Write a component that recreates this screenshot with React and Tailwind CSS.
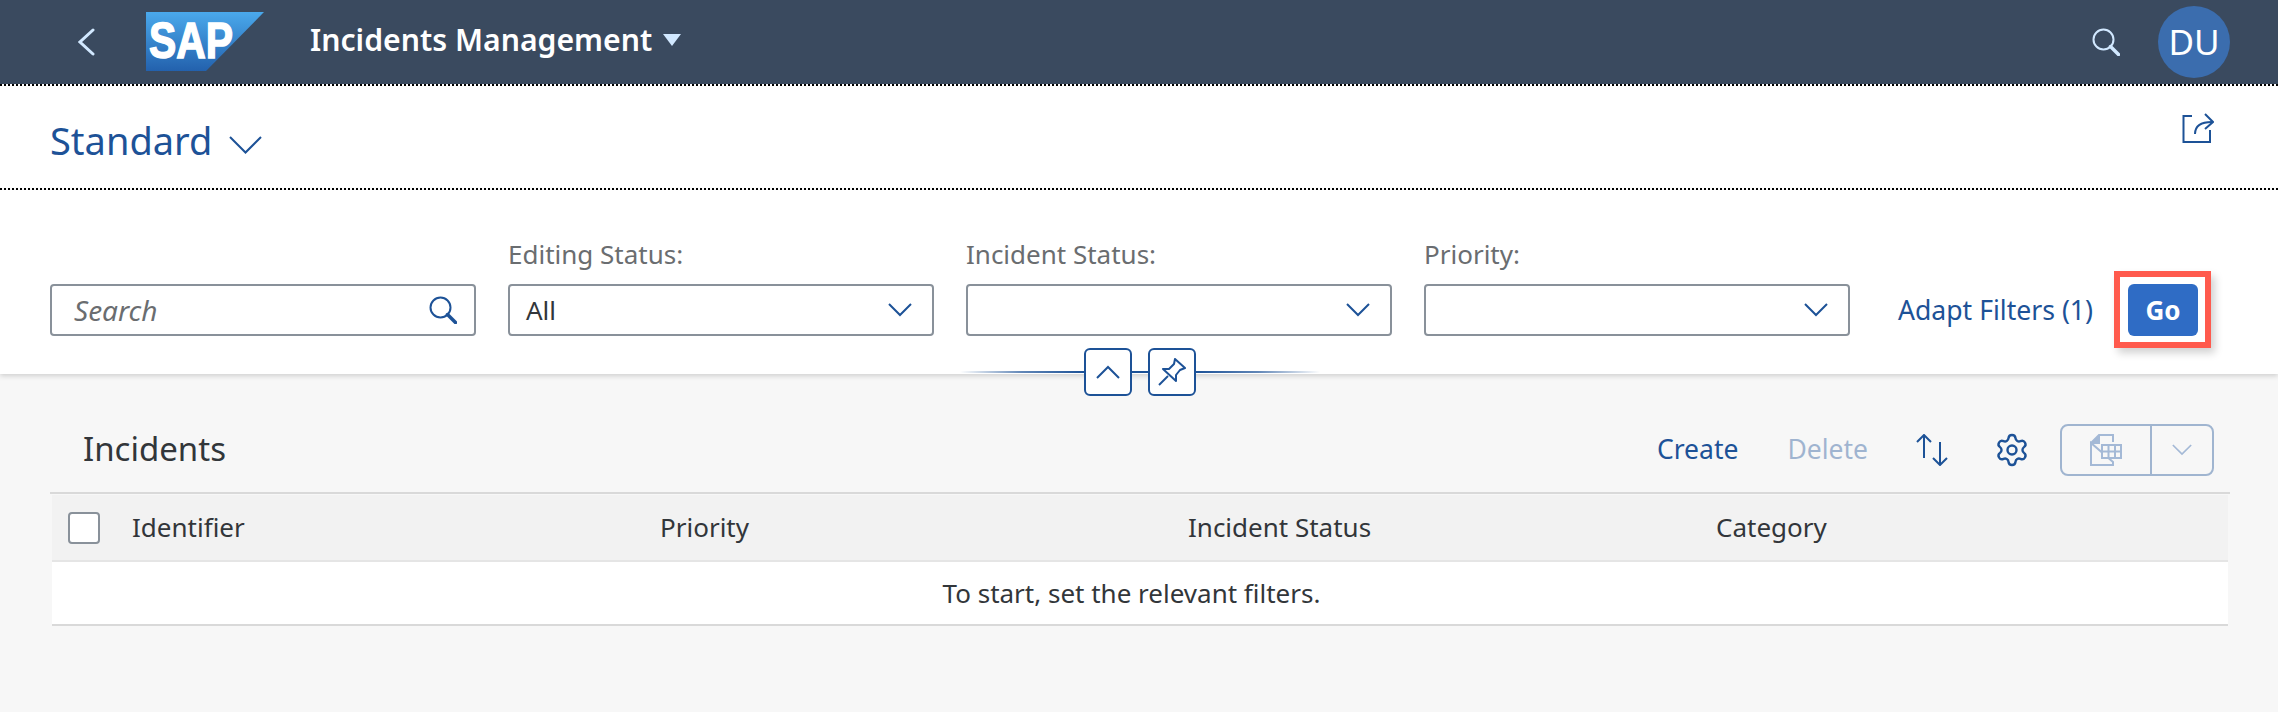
import React from 'react';
import { Settings } from 'lucide-react';

const font = "font-['Noto_Sans','Liberation_Sans',sans-serif]";

const SapLogo = () => (
    <svg width="118" height="59" viewBox="0 0 118 59">
        <defs>
            <linearGradient id="sapFill" x1="0" y1="0" x2="0" y2="1">
                <stop offset="0" stopColor="#4aa9ec" />
                <stop offset="1" stopColor="#2361ad" />
            </linearGradient>
        </defs>
        <polygon points="0,0 118,0 60,59 0,59" fill="url(#sapFill)" />
        <text x="3" y="46" fill="#fff" stroke="#fff" strokeWidth="1.5" fontFamily="Liberation Sans" fontWeight="700" fontSize="50" textLength="84" lengthAdjust="spacingAndGlyphs">
            SAP
        </text>
    </svg>
);

const Chevron = ({ className = '', up = false, size = 24 }) => (
    <svg width={size} height={size} viewBox="0 0 24 24" fill="none" stroke="currentColor" strokeWidth="2" className={className}>
        <path d={up ? 'M1 18 L12 7 L23 18' : 'M1 6 L12 17 L23 6'} />
    </svg>
);

const LensIcon = ({ className = '', stroke = 2 }) => (
    <svg viewBox="0 0 28 28" fill="none" stroke="currentColor" className={className}>
        <circle cx="11.5" cy="11.5" r="10" strokeWidth={stroke} />
        <path d="M18.5 18.5 L26.5 26.5" strokeWidth={stroke + 1.5} strokeLinecap="round" />
    </svg>
);

const SelectField = ({ label, value }) => (
    <div className="w-[426px] flex flex-col">
        <label className="text-[26px] leading-[34px] text-[#6a6d70] mb-[13px]">{label}</label>
        <div className="h-[52px] bg-white border-2 border-[#89919a] rounded-[4px] flex items-center justify-between pl-[16px] pr-[20px]">
            <span className="text-[26px] text-[#32363a]">{value}</span>
            <Chevron className="text-[#1d5297]" />
        </div>
    </div>
);

const columns = ['Identifier', 'Priority', 'Incident Status', 'Category'];

export default function App() {
    return (
        <div className={`w-[2278px] h-[712px] overflow-hidden bg-[#f7f7f7] ${font}`}>
            {/* Shell bar */}
            <header className="h-[84px] bg-[#3a4a5f] flex items-center">
                <svg width="17" height="28" viewBox="0 0 17 28" fill="none" stroke="#d1e8ff" strokeWidth="3" strokeLinecap="round" className="ml-[78px]">
                    <path d="M15 2 L2 14 L15 26" />
                </svg>
                <div className="ml-[51px] mt-[-1px]">
                    <SapLogo />
                </div>
                <span className="ml-[46px] mt-[-4px] text-[30.2px] font-semibold text-white">Incidents Management</span>
                <span className="ml-[11px] mt-[-4px] w-0 h-0 border-x-[9px] border-x-transparent border-t-[12px] border-t-[#d1e8ff]" />
                <LensIcon className="ml-auto w-[28px] h-[28px] text-[#d1e8ff]" />
                <div className="ml-[38px] mr-[48px] w-[72px] h-[72px] rounded-full bg-[#3b6dae] flex items-center justify-center text-[35px] text-white">
                    DU
                </div>
            </header>

            {/* Variant title */}
            <div className="h-[106px] bg-white border-y-2 border-dotted border-black flex items-center pl-[50px] pr-[64px]">
                <span className="mt-[7px] text-[38px] text-[#1d5297]">Standard</span>
                <svg width="33" height="18" viewBox="0 0 33 18" fill="none" stroke="#1d5297" strokeWidth="2" className="ml-[17px] mt-[16px]">
                    <path d="M1 1 L16.5 16.5 L32 1" />
                </svg>
                <svg width="32" height="30" viewBox="0 0 32 30" fill="none" stroke="#1d5297" strokeWidth="2" className="ml-auto mb-[18px]">
                    <path d="M10 3 H1.5 V29 H28 V17" />
                    <path d="M13 21 C13 14 18 9 30 9" />
                    <path d="M23 1 L31 9 L23 16" />
                </svg>
            </div>

            {/* Filter bar */}
            <div className="relative h-[184px] bg-white shadow-[0_2px_5px_rgba(0,0,0,0.16)] flex items-end pb-[38px] pl-[50px] z-10">
                <div className="flex gap-[32px] items-end">
                    <div className="w-[426px] h-[52px] border-2 border-[#89919a] rounded-[4px] flex items-center justify-between pl-[22px] pr-[17px]">
                        <span className="text-[28px] italic text-[#6a6d70]">Search</span>
                        <LensIcon className="w-[28px] h-[28px] text-[#1d5297]" />
                    </div>
                    <SelectField label="Editing Status:" value="All" />
                    <SelectField label="Incident Status:" value="" />
                    <SelectField label="Priority:" value="" />
                </div>
                <span className="ml-[48px] mb-[5px] w-[216px] text-[26.6px] text-[#1d5297]">Adapt Filters (1)</span>
                <div className="mb-[-12px] border-[6px] border-[#ff5a4d] pl-[8px] pr-[7px] pt-[7px] pb-[6px] shadow-[4px_5px_8px_rgba(0,0,0,0.18)]">
                    <div className="w-[70px] h-[52px] rounded-[6px] bg-[#2f6cc5] flex items-center justify-center text-[26px] font-bold text-white">
                        Go
                    </div>
                </div>

                {/* Collapse and pin handles on the edge of the bar */}
                <div className="absolute left-[960px] top-[158px] w-[360px] flex items-center">
                    <span className="h-[2px] flex-1 bg-gradient-to-r from-transparent via-[#1d5297]/70 to-[#1d5297]" />
                    <button className="w-[48px] h-[48px] rounded-[6px] border-2 border-[#1d5297] bg-white flex items-center justify-center text-[#1d5297]">
                        <Chevron up />
                    </button>
                    <span className="h-[2px] w-[16px] bg-[#1d5297]" />
                    <button className="w-[48px] h-[48px] rounded-[6px] border-2 border-[#1d5297] bg-white flex items-center justify-center">
                        <svg width="28" height="28" viewBox="0 0 28 28" fill="none" stroke="#1d5297" strokeWidth="2" strokeLinejoin="round">
                            <path d="M1 27 L10 18" />
                            <path d="M17 1 L27 10 L22 12 L18 17 L18 23 L5 11 L11 11 L16 6 Z" />
                        </svg>
                    </button>
                    <span className="h-[2px] flex-1 bg-gradient-to-l from-transparent via-[#1d5297]/70 to-[#1d5297]" />
                </div>
            </div>

            {/* Table toolbar */}
            <div className="flex items-center pt-[50px] pb-[16px] pl-[83px] pr-[64px] h-[118px]">
                <span className="mb-[3px] text-[33px] text-[#32363a]">Incidents</span>
                <span className="ml-auto mr-[1px] text-[26.5px] text-[#1d5297]">Create</span>
                <span className="ml-[48px] text-[26.5px] text-[#1d5297] opacity-40">Delete</span>
                <svg width="32" height="32" viewBox="0 0 32 32" fill="none" stroke="#1d5297" strokeWidth="2" className="ml-[48px]">
                    <path d="M8 1 V24 M1 8 L8 1 L15 8" />
                    <path d="M24 8 V31 M17 24 L24 31 L31 24" />
                </svg>
                <Settings size={36} strokeWidth={1.6} className="ml-[46px] text-[#1d5297]" />
                <div className="ml-[30px] w-[154px] h-[52px] rounded-[8px] border-2 border-[#1d5297]/40 flex items-center">
                    <div className="w-[90px] h-full border-r-2 border-[#1d5297]/40 flex items-center justify-center">
                        <svg width="32" height="32" viewBox="0 0 32 32" fill="none" stroke="#a4b9d6" strokeWidth="2">
                            <path d="M9 1 H23 V8 M23 28 V31 H1 V9 Z" />
                            <path d="M1 9 L9 1 V9 Z" fill="#a4b9d6" />
                            <path d="M12 11 H31 V24 H12 Z M12 17.5 H31 M18.5 11 V24 M25 11 V24" strokeWidth="2" fill="#f7f7f7" />
                        </svg>
                    </div>
                    <Chevron size={20} className="ml-[20px] text-[#a4b9d6]" />
                </div>
            </div>

            {/* Table */}
            <div className="ml-[50px] mr-[48px] border-t-2 border-[#d9d9d9]">
                <div className="mx-[2px] mt-[1px] h-[67px] border-b-2 border-[#e5e5e5] bg-[#f2f2f2] flex items-center">
                    <span className="ml-[16px] w-[32px] h-[32px] rounded-[4px] border-2 border-[#89919a] bg-white" />
                    <div className="ml-[32px] flex-1 grid grid-cols-[528px_528px_528px_1fr]">
                        {columns.map((col) => (
                            <span key={col} className="text-[26px] text-[#32363a]">{col}</span>
                        ))}
                    </div>
                </div>
                <div className="mx-[2px] h-[64px] bg-white border-b-2 border-[#d9d9d9] flex items-center justify-center pr-[17px] text-[26px] text-[#32363a]">
                    To start, set the relevant filters.
                </div>
            </div>
        </div>
    );
}
